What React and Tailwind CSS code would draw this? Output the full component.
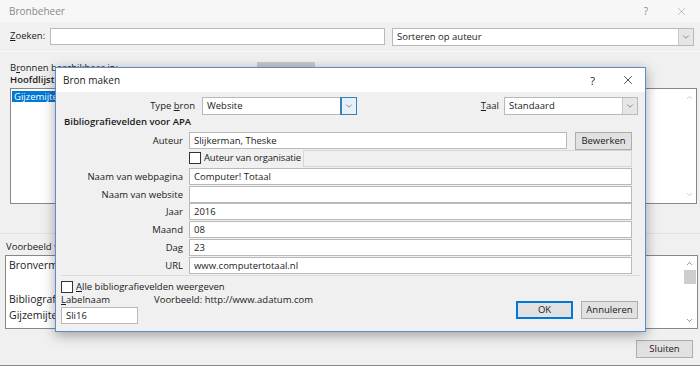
import { X, ChevronDown, ChevronUp } from 'lucide-react';

const font = { fontFamily: '"Open Sans", "Noto Sans", sans-serif' };

function Input({ value = '', className = '', disabled = false }) {
  return (
    <div className={`shrink-0 h-[17px] border flex items-center px-[4px] text-[9.5px] leading-none whitespace-nowrap ${disabled ? 'bg-[#f0f0f0] border-[#d6d6d6]' : 'bg-white border-[#b9b9b9]'} ${className}`}>
      {value}
    </div>
  );
}

function Select({ value, className = '', focused = false }) {
  return (
    <div className={`shrink-0 h-[18px] bg-white border border-[#b9b9b9] flex items-center text-[9.5px] ${className}`}>
      <span className="flex-1 pl-[4px] leading-none">{value}</span>
      <span className={`w-[15px] h-full flex items-center justify-center border-l ${focused ? 'bg-[#e5f1fb] border-[#3c7fb1] outline outline-1 outline-[#3c7fb1]' : 'bg-[#e6e6e6] border-[#c8c8c8]'}`}>
        <ChevronDown size={10} strokeWidth={1.5} className="text-[#555]" />
      </span>
    </div>
  );
}

function Checkbox() {
  return <div className="shrink-0 w-[12px] h-[12px] bg-white border border-[#333]" />;
}

function Button({ children, className = '', primary = false }) {
  return (
    <div className={`shrink-0 h-[18px] flex items-center justify-center text-[9.5px] leading-none bg-[#e1e1e1] border ${primary ? 'border-[#0078d7] outline outline-1 outline-[#0078d7] outline-offset-[-2px]' : 'border-[#adadad]'} ${className}`}>
      {children}
    </div>
  );
}

function Field({ label, children, short = false }) {
  return (
    <div className={`flex items-start shrink-0 ${short ? 'h-[17px]' : 'h-[18px]'}`}>
      <span className="w-[128px] h-[17px] flex items-center justify-end pr-[6px] text-[9.5px] leading-none">{label}</span>
      {children}
    </div>
  );
}

function BronMaken() {
  return (
    <div className="absolute left-[55px] top-[67px] w-[591px] h-[265px] bg-[#f0f0f0] border border-[#5b8ccb] shadow-[0_3px_12px_rgba(0,0,0,0.35)] flex flex-col text-[#1a1a1a]">
      <div className="shrink-0 h-[24px] bg-white flex items-center pl-[7px] pr-[10px] text-[10px] leading-none">
        <span className="flex-1">Bron maken</span>
        <span className="mr-[26px] text-[11px]">?</span>
        <X size={14} strokeWidth={1.3} />
      </div>
      <div className="shrink-0 flex items-center mt-[5px] text-[9.5px] leading-none">
        <span className="w-[146px] text-right pr-[7px]">Type <u>b</u>ron</span>
        <Select value="Website" className="w-[155px]" focused />
        <span className="ml-auto pr-[5px]"><u>T</u>aal</span>
        <Select value="Standaard" className="w-[134px] mr-[7px]" />
      </div>
      <div className="shrink-0 mx-[5px] mt-[1px] border-b border-[#dcdcdc]">
        <div className="flex items-center h-[12px] pl-[3px] text-[9.5px] leading-none">
          <span className="font-semibold">Bibliografievelden voor APA</span>
        </div>
        <div className="flex flex-col mt-[4px] pr-[8px]">
          <Field label="Auteur">
            <Input value="Slijkerman, Theske" className="w-[378px]" />
            <Button className="ml-[8px] w-[57px] h-[16px]">Bewerken</Button>
          </Field>
          <div className="flex items-start h-[18px] pl-[128px] shrink-0">
            <div className="h-[16px] flex items-center">
              <Checkbox />
            </div>
            <span className="ml-[3px] h-[16px] flex items-center text-[9.5px] leading-none whitespace-nowrap tracking-[-0.15px] w-[99px]">Auteur van organisatie</span>
            <Input disabled className="flex-1 h-[16px]" />
          </div>
          <Field label="Naam van webpagina"><Input value="Computer! Totaal" className="flex-1" /></Field>
          <Field label="Naam van website" short><Input className="flex-1" /></Field>
          <Field label="Jaar"><Input value="2016" className="flex-1" /></Field>
          <Field label="Maand"><Input value="08" className="flex-1" /></Field>
          <Field label="Dag"><Input value="23" className="flex-1" /></Field>
          <Field label="URL"><Input value="www.computertotaal.nl" className="flex-1" /></Field>
        </div>
      </div>
      <div className="shrink-0 flex items-center gap-[3px] mt-[5px] h-[12px] pl-[5px] text-[9.5px] leading-none">
        <Checkbox />
        <span><u>A</u>lle bibliografievelden weergeven</span>
      </div>
      <div className="shrink-0 flex pl-[5px] mt-[1px] text-[9.5px] leading-none">
        <div className="flex flex-col">
          <span className="h-[12px] flex items-center"><u>L</u>abelnaam</span>
          <Input value="Sli16" className="w-[77px] h-[16px] mt-[1px]" />
        </div>
        <span className="ml-[16px] h-[12px] flex items-center">Voorbeeld: http://www.adatum.com</span>
        <div className="ml-auto flex gap-[8px] pr-[7px] mt-[7px] items-start">
          <Button primary className="w-[57px]">OK</Button>
          <Button className="w-[57px]">Annuleren</Button>
        </div>
      </div>
    </div>
  );
}

export default function App() {
  return (
    <div className="relative w-[700px] h-[366px] overflow-hidden bg-[#f0f0f0] text-[#1a1a1a]" style={font}>
      <div className="h-[22px] bg-[#f7f7f7] flex items-center pl-[9px] pr-[12px] text-[10px] text-[#8a8a8a]">
        <span className="flex-1">Bronbeheer</span>
        <span className="mr-[27px]">?</span>
        <X size={13} strokeWidth={1.1} className="text-[#999]" />
      </div>
      <div className="flex items-center h-[30px] pl-[10px] pr-[6px] border-b border-[#f8f8f8]">
        <span className="w-[40px] text-[9.5px] whitespace-nowrap"><u>Z</u>oeken:</span>
        <Input className="w-[335px]" />
        <Select value="Sorteren op auteur" className="ml-[7px] flex-1" />
      </div>
      <div className="flex flex-col px-[10px] pt-[10px] text-[9.5px] border-b border-[#e2e2e2] pb-[29px]">
        <div className="flex items-center h-[12px]">
          <span className="w-[247px]">B<u>r</u>onnen beschikbaar in:</span>
          <div className="w-[58px] h-[6px] bg-[#c9c9c9] mt-[-6px]" />
        </div>
        <span className="h-[12px] leading-[12px] font-semibold">Hoofdlijst</span>
        <div className="flex mt-[2px] h-[116px] gap-[10px]">
          <div className="w-[290px] bg-white border border-[#828790] pt-[2px] px-[1px]">
            <div className="bg-[#0078d7] text-white h-[11px] leading-[11px] pl-[2px] text-[9.5px]">Gijzemijter, Jan</div>
          </div>
          <div className="flex-1 bg-white border border-[#828790] mr-[-7px] flex justify-end">
            <div className="w-[14px] flex flex-col items-center justify-between py-[4px] text-[#a0a0a0]">
              <ChevronUp size={9} strokeWidth={1.5} />
              <ChevronDown size={9} strokeWidth={1.5} />
            </div>
          </div>
        </div>
      </div>
      <div className="px-[5px] pt-[6px] text-[9.5px]">
        <div className="pl-[1px] h-[14px] leading-[14px]">Voorbeeld van bron (APA):</div>
        <div className="flex mt-[1px] h-[74px] bg-white border border-[#828790] text-[10.5px] leading-[16px] mr-[-3px]">
          <div className="flex-1 pl-[3px] pt-[1px]">
            <div>Bronvermelding:</div>
            <div className="h-[16px]" />
            <div className="mt-[2px]">Bibliografie:</div>
            <div>Gijzemijter, J. (2016).</div>
          </div>
          <div className="w-[15px] flex flex-col items-center justify-between py-[3px] text-[#555]">
            <ChevronUp size={9} strokeWidth={1.8} />
            <div className="w-[12px] h-[14px] bg-[#cdcdcd] mt-[2px]" />
            <div className="flex-1" />
            <ChevronDown size={9} strokeWidth={1.8} />
          </div>
        </div>
      </div>
      <div className="flex justify-end pr-[7px] mt-[11px]">
        <Button className="w-[57px]">Sluiten</Button>
      </div>
      <div className="absolute left-0 right-0 bottom-0 h-[1px] bg-[#8a8a8a]" />
      <BronMaken />
    </div>
  );
}
